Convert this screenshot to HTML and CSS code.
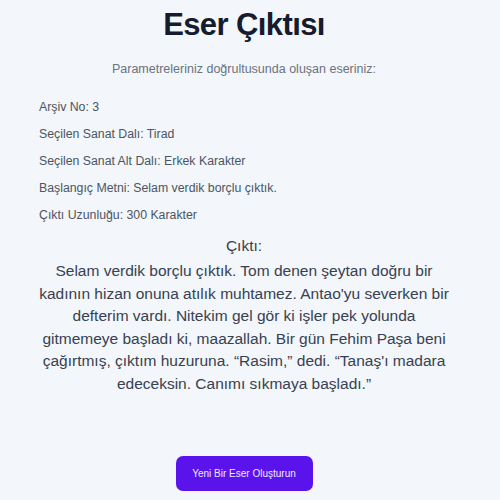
FILE: index.html
```html
<!DOCTYPE html>
<html lang="tr">
<head>
<meta charset="utf-8">
<link rel="stylesheet" href="styles.css">
</head>
<body>
<main class="page">
  <h1 class="title">Eser Çıktısı</h1>
  <p class="subtitle">Parametreleriniz doğrultusunda oluşan eseriniz:</p>
  <section class="info">
    <p>Arşiv No: 3</p>
    <p>Seçilen Sanat Dalı: Tirad</p>
    <p>Seçilen Sanat Alt Dalı: Erkek Karakter</p>
    <p>Başlangıç Metni: Selam verdik borçlu çıktık.</p>
    <p>Çıktı Uzunluğu: 300 Karakter</p>
  </section>
  <section class="output">
    <h2 class="output-label">Çıktı:</h2>
    <p class="output-text">Selam verdik borçlu çıktık. Tom denen şeytan doğru bir kadının hizan onuna atılık muhtamez. Antao'yu severken bir defterim vardı. Nitekim gel gör ki işler pek yolunda gitmemeye başladı ki, maazallah. Bir gün Fehim Paşa beni çağırtmış, çıktım huzuruna. “Rasim,” dedi. “Tanaş'ı madara edeceksin. Canımı sıkmaya başladı.”</p>
  </section>
  <div class="actions">
    <button class="btn">Yeni Bir Eser Oluşturun</button>
  </div>
</main>
</body>
</html>
```
FILE: styles.css
```css
html, body {
  margin: 0;
  padding: 0;
  background: #f3f6fa;
  font-family: "Liberation Sans", Arial, sans-serif;
}
.page {
  width: 488px;
  box-sizing: border-box;
  padding: 0 39px;
}
.title {
  margin: 0;
  padding-top: 6px;
  text-align: center;
  font-size: 31px;
  letter-spacing: -0.6px;
  font-weight: 700;
  line-height: 38px;
  color: #161b2e;
}
.subtitle {
  margin: 16px 0 0;
  text-align: center;
  font-size: 12.5px;
  line-height: 18px;
  color: #6b7280;
}
.info {
  margin-top: 16px;
}
.info p {
  margin: 0;
  font-size: 12.3px;
  line-height: 27px;
  color: #4b5563;
}
.output {
  margin-top: 6px;
  text-align: center;
}
.output-label {
  margin: 0;
  font-size: 15.5px;
  font-weight: 400;
  line-height: 22px;
  color: #374151;
}
.output-text {
  margin: 3px 0 0;
  font-size: 15.5px;
  line-height: 22.6px;
  color: #374151;
}
.actions {
  display: flex;
  justify-content: center;
  margin-top: 60px;
}
.btn {
  width: 137px;
  height: 35px;
  border: none;
  border-radius: 7px;
  background: #5b13ec;
  color: #f1e9ff;
  font-family: "Liberation Sans", Arial, sans-serif;
  font-size: 10px;
  padding: 0;
}
```
